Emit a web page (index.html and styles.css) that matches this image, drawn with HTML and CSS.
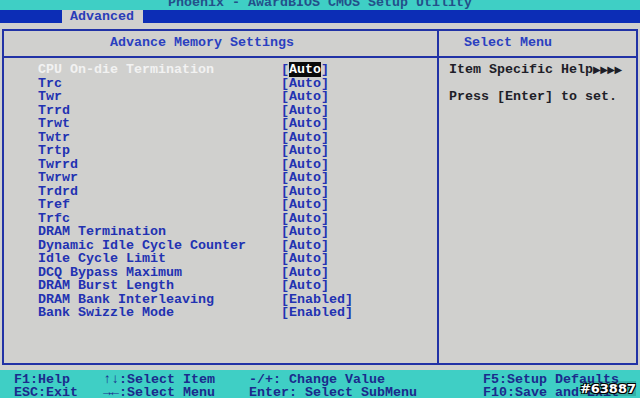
FILE: index.html
```html
<!DOCTYPE html>
<html>
<head>
<meta charset="utf-8">
<link rel="stylesheet" href="styles.css">
</head>
<body>
<div class="screen">
  <header class="titlebar"><span class="title">Phoenix - AwardBIOS CMOS Setup Utility</span></header>
  <nav class="menubar"><span class="tab">Advanced</span></nav>
  <main class="body">
    <div class="frame">
      <section class="main">
        <div class="head head-main">Advance Memory Settings</div>
        <ul class="rows">
          <li class="row active"><span class="label">CPU On-die Termination</span><span class="val">[<b class="sel">Auto</b>]</span></li>
          <li class="row"><span class="label">Trc</span><span class="val">[Auto]</span></li>
          <li class="row"><span class="label">Twr</span><span class="val">[Auto]</span></li>
          <li class="row"><span class="label">Trrd</span><span class="val">[Auto]</span></li>
          <li class="row"><span class="label">Trwt</span><span class="val">[Auto]</span></li>
          <li class="row"><span class="label">Twtr</span><span class="val">[Auto]</span></li>
          <li class="row"><span class="label">Trtp</span><span class="val">[Auto]</span></li>
          <li class="row"><span class="label">Twrrd</span><span class="val">[Auto]</span></li>
          <li class="row"><span class="label">Twrwr</span><span class="val">[Auto]</span></li>
          <li class="row"><span class="label">Trdrd</span><span class="val">[Auto]</span></li>
          <li class="row"><span class="label">Tref</span><span class="val">[Auto]</span></li>
          <li class="row"><span class="label">Trfc</span><span class="val">[Auto]</span></li>
          <li class="row"><span class="label">DRAM Termination</span><span class="val">[Auto]</span></li>
          <li class="row"><span class="label">Dynamic Idle Cycle Counter</span><span class="val">[Auto]</span></li>
          <li class="row"><span class="label">Idle Cycle Limit</span><span class="val">[Auto]</span></li>
          <li class="row"><span class="label">DCQ Bypass Maximum</span><span class="val">[Auto]</span></li>
          <li class="row"><span class="label">DRAM Burst Length</span><span class="val">[Auto]</span></li>
          <li class="row"><span class="label">DRAM Bank Interleaving</span><span class="val">[Enabled]</span></li>
          <li class="row"><span class="label">Bank Swizzle Mode</span><span class="val">[Enabled]</span></li>
        </ul>
      </section>
      <aside class="help">
        <div class="head head-help">Select Menu</div>
        <div class="help-text">
          <p class="help-line">Item Specific Help<span class="arrows">▶▶▶▶</span></p>
          <p class="help-line gap">Press [Enter] to set.</p>
        </div>
      </aside>
    </div>
  </main>
  <footer class="keys">
    <span>F1:Help</span><span>↑↓:Select Item</span><span>-/+: Change Value</span><span>F5:Setup Defaults</span>
    <span>ESC:Exit</span><span>→←:Select Menu</span><span>Enter: Select SubMenu</span><span>F10:Save and Exit</span>
  </footer>
  <span class="watermark">#63887</span>
</div>
</body>
</html>
```

FILE: styles.css
```css
* { box-sizing: border-box; }
html, body { margin: 0; padding: 0; }
body {
  background: #d0d0ce;
  font-family: "Liberation Mono", "DejaVu Sans Mono", monospace;
  font-weight: bold;
  font-size: 13.33px;
}
.screen {
  position: relative;
  width: 640px;
  height: 398px;
  overflow: hidden;
  display: flex;
  flex-direction: column;
}
.screen > * { flex-shrink: 0; }
.titlebar {
  height: 10px;
  background: #3fcfc5;
  overflow: hidden;
  text-align: center;
}
.title {
  display: block;
  line-height: 12px;
  margin-top: -3px;
  color: #23508a;
  white-space: pre;
}
.menubar {
  height: 13px;
  background: #0c2db6;
  padding-left: 62px;
  display: flex;
}
.tab {
  background: #d0d0ce;
  color: #2a3db8;
  padding: 0 9px 0 8px;
  line-height: 13px;
  font-size: 13.33px;
}
.body {
  height: 347px;
  padding: 6px 2px 5px 2px;
}
.frame {
  height: 100%;
  border: 2px solid #2132a6;
  display: grid;
  grid-template-columns: 435px 1fr;
}
.main {
  border-right: 2px solid #2132a6;
}
.head {
  height: 27px;
  border-bottom: 2px solid #2132a6;
  line-height: 24px;
  color: #2a3fc0;
  white-space: pre;
}
.head-main { padding-left: 106px; }
.head-help { padding-left: 25px; }
.rows {
  list-style: none;
  margin: 0;
  padding: 5px 0 0 34px;
}
.row {
  display: grid;
  grid-template-columns: 243px auto;
  line-height: 13.5px;
  height: 13.5px;
  color: #2232b2;
  white-space: pre;
}
.row.active .label { color: #f2f2f2; }
.sel {
  background: #0a0a0a;
  color: #ffffff;
  font-weight: bold;
}
.help-text {
  padding: 5px 0 0 10px;
  color: #1e1e28;
}
.help-line {
  margin: 0;
  line-height: 13.5px;
  white-space: pre;
}
.help-line.gap { margin-top: 13.5px; }
.arrows {
  font-family: "DejaVu Sans", sans-serif;
  font-size: 10px;
  letter-spacing: -0.5px;
}
.keys {
  height: 28px;
  background: #3fcfc5;
  color: #1b2b8c;
  display: grid;
  grid-template-columns: 89px 146px 234px 1fr;
  padding: 4px 0 0 14px;
  line-height: 12.5px;
  white-space: pre;
}
.watermark {
  position: absolute;
  right: 4px;
  bottom: 2px;
  font-family: "DejaVu Sans", sans-serif;
  font-weight: bold;
  font-size: 13px;
  color: #ffffff;
  text-shadow: 1px 1px 0 #000, -1px -1px 0 #000, 1px -1px 0 #000, -1px 1px 0 #000;
  background: rgba(0,0,0,0.15);
}
```
